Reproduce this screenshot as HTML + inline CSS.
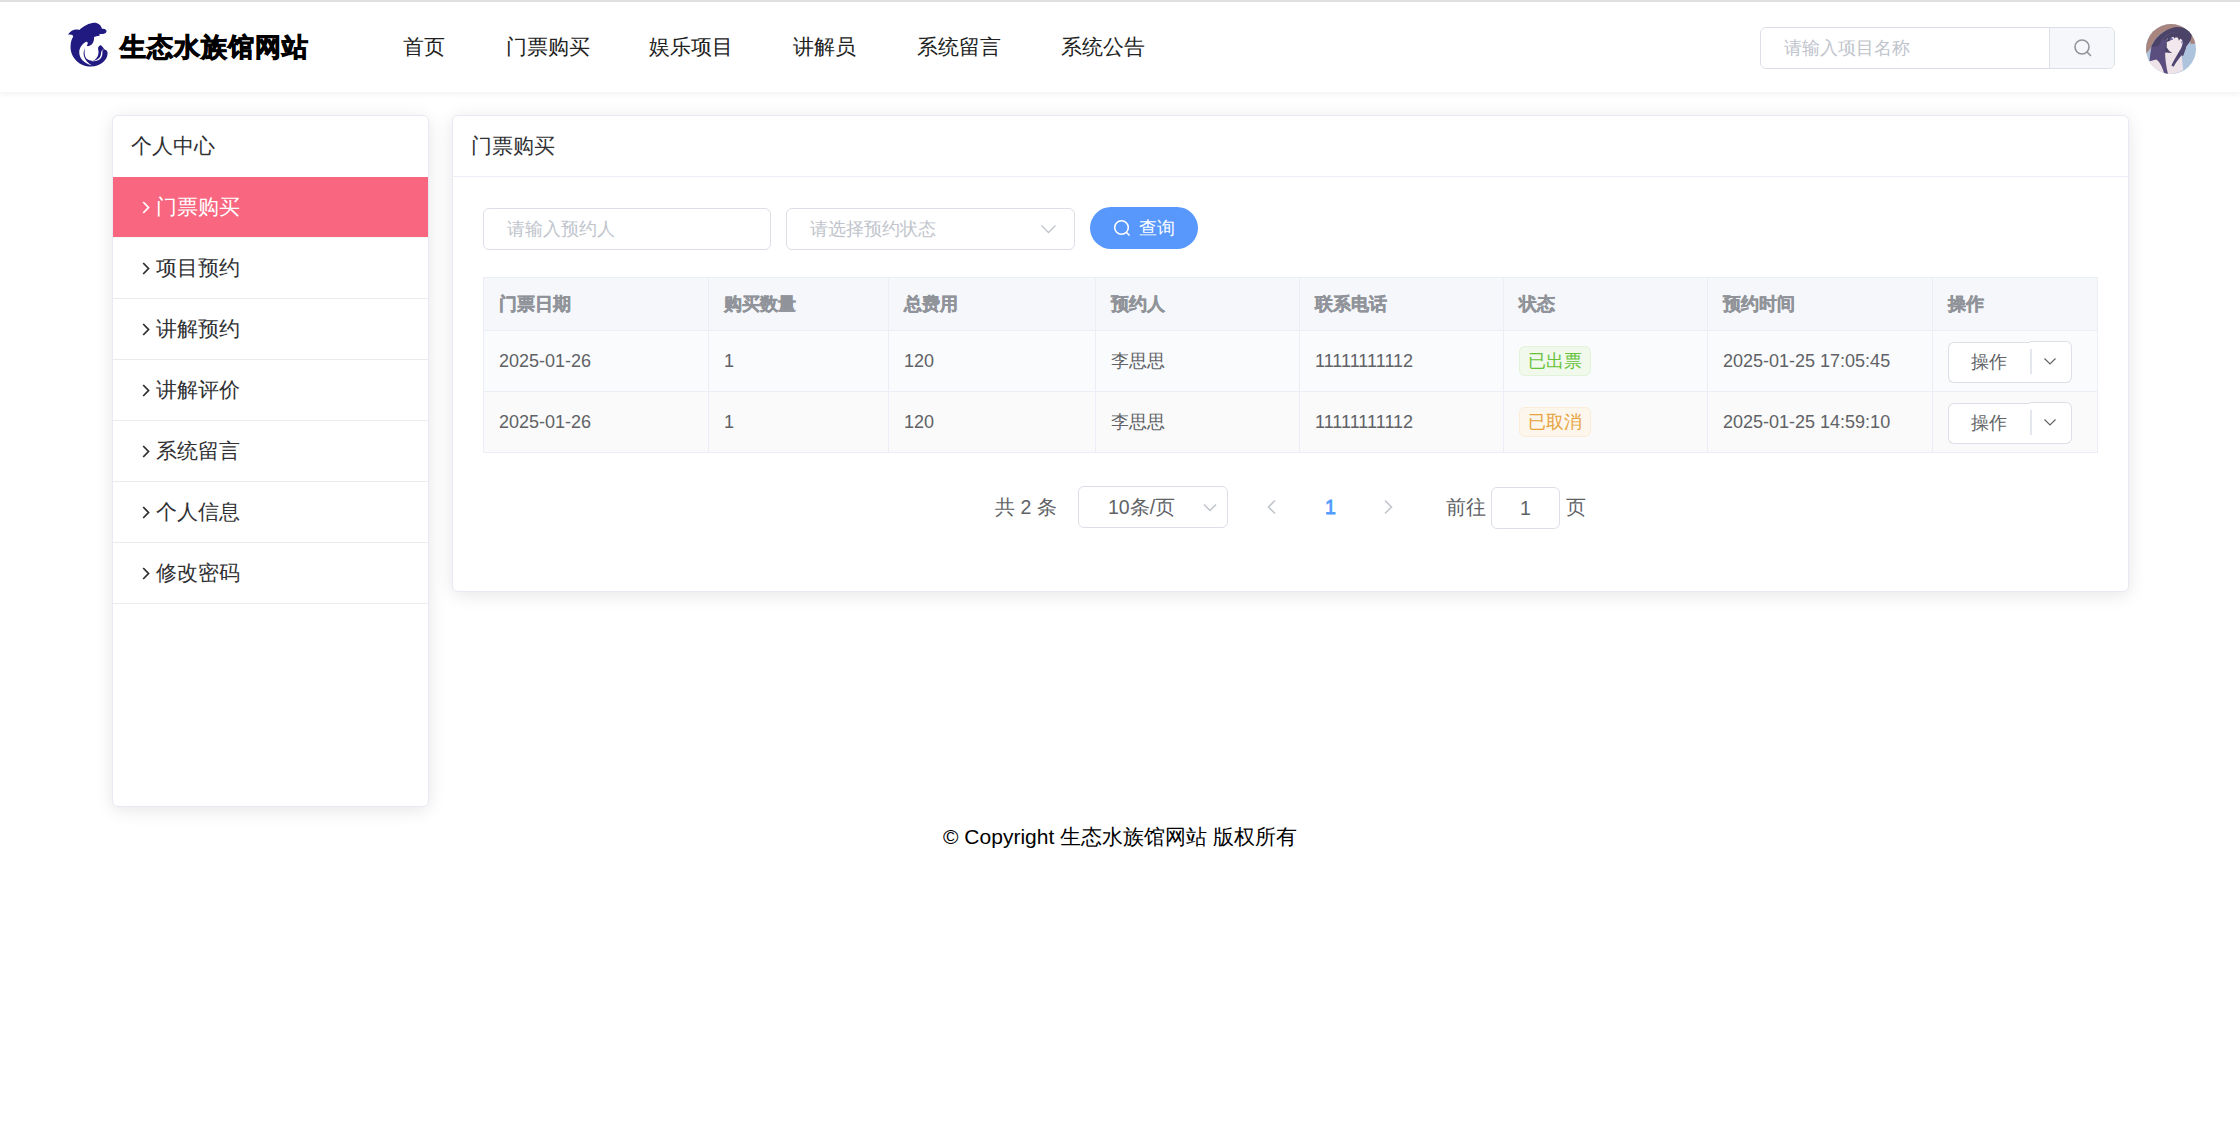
<!DOCTYPE html>
<html><head><meta charset="utf-8">
<style>
*{margin:0;padding:0;box-sizing:border-box}
html,body{width:2240px;height:1147px;overflow:hidden;background:#fff;font-family:"Liberation Sans",sans-serif;color:#303133}
.abs{position:absolute}
#topline{left:0;top:0;width:2240px;height:2px;background:#e0e2df}
#header{left:0;top:2px;width:2240px;height:90px;background:#fff;box-shadow:0 2px 6px rgba(0,0,0,.06)}
#logo{left:64px;top:19px;width:48px;height:50px}
#title{left:120px;top:27px;font-size:26px;letter-spacing:1px;font-weight:900;-webkit-text-stroke:0.9px #000;color:#000;line-height:40px;white-space:nowrap}
.nav{top:26.5px;font-size:21px;line-height:40px;color:#222;white-space:nowrap}
#search{left:1760px;top:27px;width:355px;height:42px;border:1px solid #dcdfe6;border-radius:6px;background:#fff;overflow:hidden}
#search .ph{position:absolute;left:23px;top:0;line-height:40px;font-size:18px;color:#c0c4cc}
#search .btn{position:absolute;left:288px;top:0;width:66px;height:40px;background:#f5f7fa;border-left:1px solid #dcdfe6}
#avatar{left:2146px;top:24px;width:50px;height:50px;border-radius:50%;overflow:hidden}
.card{background:#fff;border:1px solid #e9e9f2;border-radius:6px;box-shadow:0 3px 18px rgba(0,0,0,.1)}
#side{left:112px;top:115px;width:317px;height:692px}
#side .hd{position:absolute;left:18px;top:0;line-height:60px;font-size:21px;color:#303133}
.item{position:absolute;left:0;width:315px;height:61px;border-bottom:1px solid #ebebeb;font-size:21px;color:#303133}
.item span{position:absolute;left:43px;top:0;line-height:60px}
.item svg{position:absolute;left:29px;top:24px}
.item.on{background:#f8667f;color:#fff;border-bottom-color:#f1f9f8;height:61px}
#main{left:452px;top:115px;width:1677px;height:477px}
#main .hd{position:absolute;left:0;top:0;width:1675px;height:61px;border-bottom:1px solid #ebeef5}
#main .hd span{position:absolute;left:18px;top:0;line-height:60px;font-size:21px;color:#303133}
.inp{position:absolute;height:42px;border:1px solid #dcdfe6;border-radius:6px;background:#fff}
.inp .ph{position:absolute;left:23px;top:0;line-height:40px;font-size:18px;color:#c0c4cc;white-space:nowrap}
#qbtn{left:1090px;top:207px;width:108px;height:42px;border-radius:21px;background:#5898fd;color:#fff;font-size:18px}
table{position:absolute;left:483px;top:277px;border-collapse:separate;border-spacing:0;table-layout:fixed;font-size:18px;color:#606266;border-left:1px solid #ebeef5;border-top:1px solid #ebeef5;width:1615px}
td,th{border-right:1px solid #ebeef5;border-bottom:1px solid #ebeef5;text-align:left;padding:0 0 0 15px;white-space:nowrap}
th{height:53px;background:#f5f7fa;color:#909399;font-weight:bold;-webkit-text-stroke:0.4px #909399}
tr.r1 td{height:61px;background:#fafbfd}
tr.r2 td{height:61px;background:#fafafa}
.tag{display:inline-block;height:30px;line-height:28px;padding:0 8px;border-radius:6px;border:1px solid;font-size:18px}
.tag.g{background:#f0f9eb;border-color:#e1f3d8;color:#67c23a}
.tag.o{background:#fdf6ec;border-color:#faecd8;color:#e6a23c}
.dd{position:relative;top:1px;display:inline-block;width:124px;height:42px;vertical-align:middle}
.dd .l{position:absolute;left:0;top:1px;width:83px;height:41px;border:1px solid #dcdfe6;border-right:none;border-radius:6px 0 0 6px;background:#fff}
.dd .r{position:absolute;left:82px;top:0;width:42px;height:42px;border:1px solid #dcdfe6;border-left:none;border-radius:0 6px 6px 0;background:#fff}
.dd span{position:absolute;left:23px;top:0;line-height:42px;font-size:18px;color:#606266}
.dd i{position:absolute;left:82px;top:8px;width:1.5px;height:25px;background:#e4e7ed}
.dd svg{position:absolute;left:95px;top:16px}
.pg{position:absolute;font-size:19.5px;color:#606266;line-height:42px;top:486px;white-space:nowrap}
#footer{left:0;top:819px;width:2240px;text-align:center;font-size:21px;color:#000;line-height:36px}
</style></head>
<body>
<div id="topline" class="abs"></div>
<div id="header" class="abs"></div>
<svg id="logo" class="abs" viewBox="0 0 1101 1147" width="48" height="50" style="left:64px;top:19px">
  <path fill="#211a80" d="M90,355 C150,270 250,220 350,250 C450,160 580,90 690,85 C790,85 850,140 870,225 C930,215 975,240 975,285 C970,330 900,350 820,345 C805,360 815,372 825,378 C760,390 710,400 690,415 L940,705 C990,705 1005,760 1000,800 C990,960 820,1090 620,1090 C350,1090 150,880 150,640 C150,530 180,460 210,410 C215,370 190,345 90,355 Z"/>
  <path fill="#fff" d="M520,620 C525,600 545,580 545,555 C545,530 530,515 510,520 C420,560 350,660 350,760 C350,900 450,1010 640,1062 C560,1020 490,950 460,860 C440,790 450,720 480,670 C470,720 465,800 490,870 C520,930 580,955 660,955 C730,935 780,870 790,790 C795,750 790,730 785,700 C770,640 810,600 855,600 C900,600 925,640 915,680 C875,705 850,740 848,790 C845,880 780,950 620,965 C800,990 870,900 880,810 C882,770 880,740 888,715 C905,690 935,685 958,695 C985,708 1000,730 1005,760 L1101,760 L1101,415 L690,415 C690,480 680,545 640,580 C600,615 560,625 520,620 Z"/>
</svg>
<div id="title" class="abs">生态水族馆网站</div>
<div class="nav abs" style="left:403px">首页</div>
<div class="nav abs" style="left:506px">门票购买</div>
<div class="nav abs" style="left:649px">娱乐项目</div>
<div class="nav abs" style="left:793px">讲解员</div>
<div class="nav abs" style="left:917px">系统留言</div>
<div class="nav abs" style="left:1061px">系统公告</div>
<div id="search" class="abs"><span class="ph">请输入项目名称</span><div class="btn">
  <svg class="abs" style="left:23px;top:10px" width="20" height="20" viewBox="0 0 20 20"><circle cx="9" cy="9" r="7" fill="none" stroke="#909399" stroke-width="1.6"/><path d="M14 14 L17.5 17.5" stroke="#909399" stroke-width="1.6" stroke-linecap="round"/></svg>
</div></div>
<div id="avatar" class="abs">
  <svg width="50" height="50" viewBox="111 111 925 925">
    <rect x="111" y="111" width="925" height="925" fill="#adc4dc"/>
    <path d="M111,111 H1036 V470 L940,480 C900,300 800,200 650,190 C450,200 260,350 200,560 L111,660 Z" fill="#a8857f"/>
    <path d="M330,540 C400,380 520,260 660,260 C780,270 840,360 860,520 L800,700 L480,700 Z" fill="#4b4368"/>
    <path d="M170,800 C260,760 380,740 470,640 C560,650 640,660 760,620 L800,960 C700,1020 600,1036 500,1036 L300,990 C240,940 200,880 170,800 Z" fill="#efe3ea"/>
    <path d="M495,390 C560,330 720,340 795,420 C810,520 790,620 700,680 C620,670 530,620 495,540 Z" fill="#f3e7ee"/>
    <path d="M220,500 C300,440 420,400 490,410 C450,600 460,800 520,1036 L450,1036 C410,900 370,820 300,770 L175,800 C190,680 200,580 220,500 Z" fill="#594e7e"/>
    <path d="M210,540 C260,380 420,220 640,170 C790,150 920,210 955,310 C960,400 900,480 860,520 L820,470 C800,380 740,290 650,270 C520,270 420,360 340,520 Z" fill="#4b4368"/>
    <path d="M480,450 C520,330 600,280 680,280 C760,290 810,350 830,460 L790,430 L760,360 L720,420 L690,320 L640,380 L600,330 L560,420 Z" fill="#4b4368"/>
    <path d="M790,400 C850,450 870,560 820,620 C760,700 680,800 620,900 L580,880 C640,760 700,660 760,560 C790,500 790,440 790,400 Z" fill="#4f4672"/>
    <ellipse cx="585" cy="392" rx="28" ry="16" fill="#6d6db0"/>
    <ellipse cx="775" cy="445" rx="18" ry="14" fill="#6d6db0"/>
  </svg>
</div>

<div id="side" class="card abs">
  <div class="hd">个人中心</div>
  <div class="item on" style="top:61px"><svg width="8" height="13" viewBox="0 0 8 13"><path d="M1.2 1 L6.5 6.5 L1.2 12" fill="none" stroke="#fff" stroke-width="1.8"/></svg><span>门票购买</span></div>
  <div class="item" style="top:122px"><svg width="8" height="13" viewBox="0 0 8 13"><path d="M1.2 1 L6.5 6.5 L1.2 12" fill="none" stroke="#303133" stroke-width="1.8"/></svg><span>项目预约</span></div>
  <div class="item" style="top:183px"><svg width="8" height="13" viewBox="0 0 8 13"><path d="M1.2 1 L6.5 6.5 L1.2 12" fill="none" stroke="#303133" stroke-width="1.8"/></svg><span>讲解预约</span></div>
  <div class="item" style="top:244px"><svg width="8" height="13" viewBox="0 0 8 13"><path d="M1.2 1 L6.5 6.5 L1.2 12" fill="none" stroke="#303133" stroke-width="1.8"/></svg><span>讲解评价</span></div>
  <div class="item" style="top:305px"><svg width="8" height="13" viewBox="0 0 8 13"><path d="M1.2 1 L6.5 6.5 L1.2 12" fill="none" stroke="#303133" stroke-width="1.8"/></svg><span>系统留言</span></div>
  <div class="item" style="top:366px"><svg width="8" height="13" viewBox="0 0 8 13"><path d="M1.2 1 L6.5 6.5 L1.2 12" fill="none" stroke="#303133" stroke-width="1.8"/></svg><span>个人信息</span></div>
  <div class="item" style="top:427px"><svg width="8" height="13" viewBox="0 0 8 13"><path d="M1.2 1 L6.5 6.5 L1.2 12" fill="none" stroke="#303133" stroke-width="1.8"/></svg><span>修改密码</span></div>
</div>

<div id="main" class="card abs">
  <div class="hd"><span>门票购买</span></div>
</div>
<div class="inp abs" style="left:483px;top:208px;width:288px"><span class="ph">请输入预约人</span></div>
<div class="inp abs" style="left:786px;top:208px;width:289px"><span class="ph">请选择预约状态</span>
  <svg class="abs" style="left:253px;top:15px" width="18" height="11" viewBox="0 0 18 11"><path d="M1.5 1.5 L8.5 8.5 L15.5 1.5" fill="none" stroke="#c0c4cc" stroke-width="1.3"/></svg>
</div>
<div id="qbtn" class="abs">
  <svg class="abs" style="left:23px;top:12px" width="19" height="19" viewBox="0 0 19 19"><circle cx="8.5" cy="8.5" r="6.8" fill="none" stroke="#fff" stroke-width="1.6"/><path d="M13.3 13.3 L16.5 16.5" stroke="#fff" stroke-width="1.6"/></svg>
  <span class="abs" style="left:49px;top:0;line-height:42px">查询</span>
</div>

<table>
<colgroup><col style="width:225px"><col style="width:180px"><col style="width:207px"><col style="width:204px"><col style="width:204px"><col style="width:204px"><col style="width:225px"><col style="width:165px"></colgroup>
<tr><th>门票日期</th><th>购买数量</th><th>总费用</th><th>预约人</th><th>联系电话</th><th>状态</th><th>预约时间</th><th>操作</th></tr>
<tr class="r1"><td>2025-01-26</td><td>1</td><td>120</td><td>李思思</td><td>11111111112</td><td><span class="tag g">已出票</span></td><td>2025-01-25 17:05:45</td><td><div class="dd"><b class="l"></b><b class="r"></b><span>操作</span><i></i><svg width="14" height="9" viewBox="0 0 14 9"><path d="M1.5 1.5 L7 7 L12.5 1.5" fill="none" stroke="#606266" stroke-width="1.2"/></svg></div></td></tr>
<tr class="r2"><td>2025-01-26</td><td>1</td><td>120</td><td>李思思</td><td>11111111112</td><td><span class="tag o">已取消</span></td><td>2025-01-25 14:59:10</td><td><div class="dd"><b class="l"></b><b class="r"></b><span>操作</span><i></i><svg width="14" height="9" viewBox="0 0 14 9"><path d="M1.5 1.5 L7 7 L12.5 1.5" fill="none" stroke="#606266" stroke-width="1.2"/></svg></div></td></tr>
</table>

<div class="pg" style="left:995px">共 2 条</div>
<div class="inp abs" style="left:1078px;top:486px;width:150px;height:42px">
  <span class="abs" style="left:29px;top:0;line-height:40px;font-size:19.5px;color:#606266">10条/页</span>
  <svg class="abs" style="left:124px;top:16px" width="14" height="9" viewBox="0 0 14 9"><path d="M1 1.5 L7 7.5 L13 1.5" fill="none" stroke="#c0c4cc" stroke-width="1.5"/></svg>
</div>
<svg class="abs" style="left:1266px;top:499px" width="11" height="16" viewBox="0 0 11 16"><path d="M9 1.5 L2.5 8 L9 14.5" fill="none" stroke="#c3c6cd" stroke-width="1.6"/></svg>
<div class="pg" style="left:1325px;color:#4f9afd;-webkit-text-stroke:0.8px #4f9afd">1</div>
<svg class="abs" style="left:1383px;top:499px" width="11" height="16" viewBox="0 0 11 16"><path d="M2 1.5 L8.5 8 L2 14.5" fill="none" stroke="#c3c6cd" stroke-width="1.6"/></svg>
<div class="pg" style="left:1446px">前往</div>
<div class="inp abs" style="left:1491px;top:487px;width:69px;height:42px">
  <span class="abs" style="left:0;width:67px;text-align:center;top:0;line-height:40px;font-size:19.5px;color:#606266">1</span>
</div>
<div class="pg" style="left:1566px">页</div>

<div id="footer" class="abs">© Copyright 生态水族馆网站 版权所有</div>
</body></html>
